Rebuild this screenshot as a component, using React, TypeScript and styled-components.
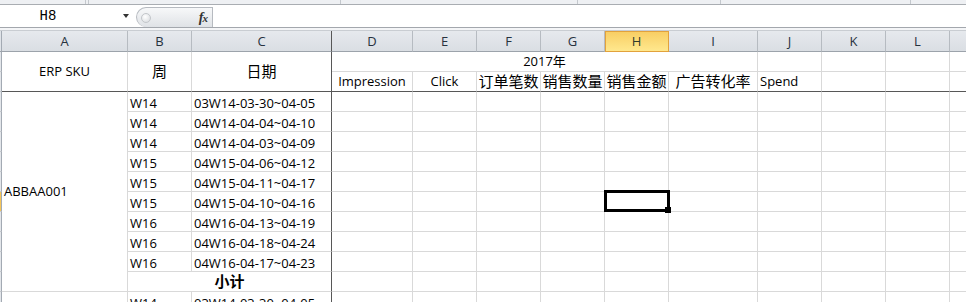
import React from 'react';
import styled, { createGlobalStyle, css } from 'styled-components';

const GlobalStyle = createGlobalStyle`
  html, body {
    margin: 0;
    padding: 0;
    background: #fff;
    overflow: hidden;
  }
  body {
    font-family: "Open Sans", "Noto Sans CJK SC", sans-serif;
  }
`;

const Window = styled.div`
  width: 966px;
  height: 302px;
  overflow: hidden;
  display: flex;
  flex-direction: column;
  background: #fff;
`;

const RibbonEdge = styled.div`
  display: flex;
  flex: none;
  height: 5px;
  box-sizing: border-box;
  background: #eef0f3;
  border-bottom: 1px solid #a9adb2;
`;

const RibbonGroup = styled.div<{ $w?: number }>`
  box-sizing: border-box;
  flex: ${(p) => (p.$w ? 'none' : '1')};
  width: ${(p) => (p.$w ? `${p.$w}px` : 'auto')};
  border-right: ${(p) => (p.$w ? '1px solid #c4c8cd' : 'none')};
`;

const FormulaBar = styled.div`
  display: flex;
  flex: none;
  height: 23px;
  box-sizing: border-box;
  border-bottom: 1px solid #a3a7ad;
  background: #fff;
`;

const NameBox = styled.div`
  display: flex;
  align-items: center;
  width: 136px;
  flex: none;
`;

const NameText = styled.span`
  width: 96px;
  text-align: center;
  font-family: "Liberation Mono", monospace;
  font-size: 14px;
  color: #000;
`;

const DropArrow = styled.span`
  margin-left: auto;
  margin-right: 7px;
  width: 0;
  height: 0;
  border-left: 3.5px solid transparent;
  border-right: 3.5px solid transparent;
  border-top: 4px solid #333;
`;

const FxGroup = styled.div`
  display: flex;
  align-items: center;
  width: 77px;
  flex: none;
  margin-top: 2px;
  box-sizing: border-box;
  border: 1px solid #b6bac0;
  border-bottom: none;
  border-radius: 10px 0 0 10px;
  background: linear-gradient(#f7f8f9, #dfe2e6);
`;

const GripDot = styled.span`
  width: 8px;
  height: 8px;
  margin-left: 4px;
  border-radius: 50%;
  border: 1px solid #c3c6ca;
  background: radial-gradient(circle at 40% 35%, #ffffff, #d5d8dc);
`;

const FxLabel = styled.span`
  margin-left: auto;
  margin-right: 5px;
  font-family: "Liberation Serif", serif;
  font-style: italic;
  font-weight: 700;
  font-size: 14px;
  color: #333;
  letter-spacing: -1px;
`;

const FxSub = styled.span`
  font-size: 11px;
`;

const FormulaInput = styled.div`
  flex: 1;
  background: #fff;
`;

const HeaderGap = styled.div`
  flex: none;
  height: 3px;
  box-sizing: border-box;
  background: #f4f5f7;
  border-bottom: 1px solid #c9cdd2;
`;

const SheetViewport = styled.div`
  flex: 1;
  overflow: hidden;
`;

const COLS = [
  { key: 'A', w: 126 },
  { key: 'B', w: 64 },
  { key: 'C', w: 140 },
  { key: 'D', w: 81 },
  { key: 'E', w: 64 },
  { key: 'F', w: 64 },
  { key: 'G', w: 64 },
  { key: 'H', w: 64 },
  { key: 'I', w: 89 },
  { key: 'J', w: 64 },
  { key: 'K', w: 64 },
  { key: 'L', w: 64 },
  { key: 'M', w: 64 },
];

const Sheet = styled.div`
  display: grid;
  grid-template-columns: 2px ${COLS.map((c) => `${c.w}px`).join(' ')};
  grid-template-rows: 21px;
  grid-auto-rows: 20px;
  width: max-content;
`;

const FREEZE = '#575757';
const GRID = '#d9d9d9';

const Corner = styled.div`
  box-sizing: border-box;
  background: #dfe3e8;
  border-right: 1px solid #a3aab3;
  border-bottom: 1px solid #9ca3ab;
`;

const ColHeader = styled.div<{ $active?: boolean; $freeze?: boolean }>`
  box-sizing: border-box;
  display: flex;
  align-items: center;
  justify-content: center;
  font-size: 13px;
  color: #27323e;
  background: linear-gradient(#e6e9ed, #dadee3);
  border-right: 1px solid ${(p) => (p.$freeze ? FREEZE : '#b6bbc1')};
  border-bottom: 1px solid #9ca3ab;
  ${(p) =>
    p.$active &&
    css`
      background: linear-gradient(#f8cd62, #ffe88e);
      border-right-color: #e2a23c;
      border-bottom-color: #e2a23c;
      box-shadow: inset 1px 1px 0 #e2a23c;
      color: #2f3b2c;
    `}
`;

const RowStub = styled.div<{ $active?: boolean }>`
  box-sizing: border-box;
  background: ${(p) => (p.$active ? '#f6c65a' : '#e3e6ea')};
  border-right: 1px solid #a3aab3;
  border-bottom: 1px solid #c4c8cd;
`;

interface CellProps {
  $cols?: number;
  $rows?: number;
  $center?: boolean;
  $middle?: boolean;
  $freezeRight?: boolean;
  $freezeBottom?: boolean;
  $size?: number;
  $bold?: boolean;
  $selected?: boolean;
}

const Cell = styled.div<CellProps>`
  grid-column: span ${(p) => p.$cols ?? 1};
  grid-row: span ${(p) => p.$rows ?? 1};
  box-sizing: border-box;
  display: flex;
  align-items: ${(p) => (p.$middle ? 'center' : 'flex-end')};
  justify-content: ${(p) => (p.$center ? 'center' : 'flex-start')};
  padding: 0 ${(p) => (p.$center ? 0 : 2)}px;
  min-width: 0;
  white-space: nowrap;
  overflow: ${(p) => (p.$selected ? 'visible' : 'hidden')};
  border-right: 1px solid ${(p) => (p.$freezeRight ? FREEZE : GRID)};
  border-bottom: 1px solid ${(p) => (p.$freezeBottom ? FREEZE : GRID)};
  font-size: ${(p) => p.$size ?? 13}px;
  font-weight: ${(p) => (p.$bold ? 700 : 400)};
  line-height: 15px;
  color: #000;
  ${(p) =>
    p.$selected &&
    css`
      position: relative;
      z-index: 2;
      &::after {
        content: '';
        position: absolute;
        top: -2px;
        left: -1px;
        right: -2px;
        bottom: -1px;
        border: 3px solid #000;
      }
      &::before {
        content: '';
        position: absolute;
        right: -3px;
        bottom: -2px;
        width: 6px;
        height: 6px;
        background: #000;
        z-index: 1;
      }
    `}
`;

const DATA_COLS = ['D', 'E', 'F', 'G', 'H', 'I', 'J', 'K', 'L', 'M'];

const WEEKS: [string, string][] = [
  ['W14', '03W14-03-30~04-05'],
  ['W14', '04W14-04-04~04-10'],
  ['W14', '04W14-04-03~04-09'],
  ['W15', '04W15-04-06~04-12'],
  ['W15', '04W15-04-11~04-17'],
  ['W15', '04W15-04-10~04-16'],
  ['W16', '04W16-04-13~04-19'],
  ['W16', '04W16-04-18~04-24'],
  ['W16', '04W16-04-17~04-23'],
];

const METRICS: { label: string; cjk?: boolean; left?: boolean }[] = [
  { label: 'Impression' },
  { label: 'Click' },
  { label: '订单笔数', cjk: true },
  { label: '销售数量', cjk: true },
  { label: '销售金额', cjk: true },
  { label: '广告转化率', cjk: true },
  { label: 'Spend', left: true },
  { label: '' },
  { label: '' },
  { label: '' },
];

const ACTIVE_COL = 'H';
const ACTIVE_ROW = 5; // index in WEEKS -> row 8

const EmptyCells: React.FC<{ selectedCol?: string }> = ({ selectedCol }) => (
  <>
    {DATA_COLS.map((c) => (
      <Cell key={c} $selected={c === selectedCol} />
    ))}
  </>
);

const App: React.FC = () => {
  return (
    <Window>
      <GlobalStyle />
      <RibbonEdge>
        <RibbonGroup $w={86} />
        <RibbonGroup $w={3} />
        <RibbonGroup $w={252} />
        <RibbonGroup $w={237} />
        <RibbonGroup $w={143} />
        <RibbonGroup $w={190} />
        <RibbonGroup />
      </RibbonEdge>
      <FormulaBar>
        <NameBox>
          <NameText>H8</NameText>
          <DropArrow />
        </NameBox>
        <FxGroup>
          <GripDot />
          <FxLabel>
            f<FxSub>x</FxSub>
          </FxLabel>
        </FxGroup>
        <FormulaInput />
      </FormulaBar>
      <HeaderGap />
      <SheetViewport>
        <Sheet>
          <Corner />
          {COLS.map((c) => (
            <ColHeader key={c.key} $active={c.key === ACTIVE_COL} $freeze={c.key === 'C'}>
              {c.key}
            </ColHeader>
          ))}

          <RowStub />
          <Cell $rows={2} $center $middle $freezeBottom>ERP SKU</Cell>
          <Cell $rows={2} $center $middle $freezeBottom $size={15}>周</Cell>
          <Cell $rows={2} $center $middle $freezeBottom $freezeRight $size={15}>日期</Cell>
          <Cell $cols={6} $center $middle>2017年</Cell>
          <Cell />
          <Cell />
          <Cell />
          <Cell />

          <RowStub />
          {METRICS.map((m, i) => (
            <Cell key={i} $center={!m.left} $middle $freezeBottom $size={m.cjk ? 15 : 13}>
              {m.label}
            </Cell>
          ))}

          {WEEKS.map(([week, range], i) => (
            <React.Fragment key={i}>
              <RowStub $active={i === ACTIVE_ROW} />
              {i === 0 && (
                <Cell $rows={10} $middle>ABBAA001</Cell>
              )}
              <Cell>{week}</Cell>
              <Cell $freezeRight>{range}</Cell>
              <EmptyCells selectedCol={i === ACTIVE_ROW ? ACTIVE_COL : undefined} />
            </React.Fragment>
          ))}

          <RowStub />
          <Cell $cols={2} $center $middle $freezeRight $bold $size={15}>小计</Cell>
          <EmptyCells />

          <RowStub />
          <Cell />
          <Cell>W14</Cell>
          <Cell $freezeRight>03W14-03-30~04-05</Cell>
          <EmptyCells />
        </Sheet>
      </SheetViewport>
    </Window>
  );
};

export default App;
